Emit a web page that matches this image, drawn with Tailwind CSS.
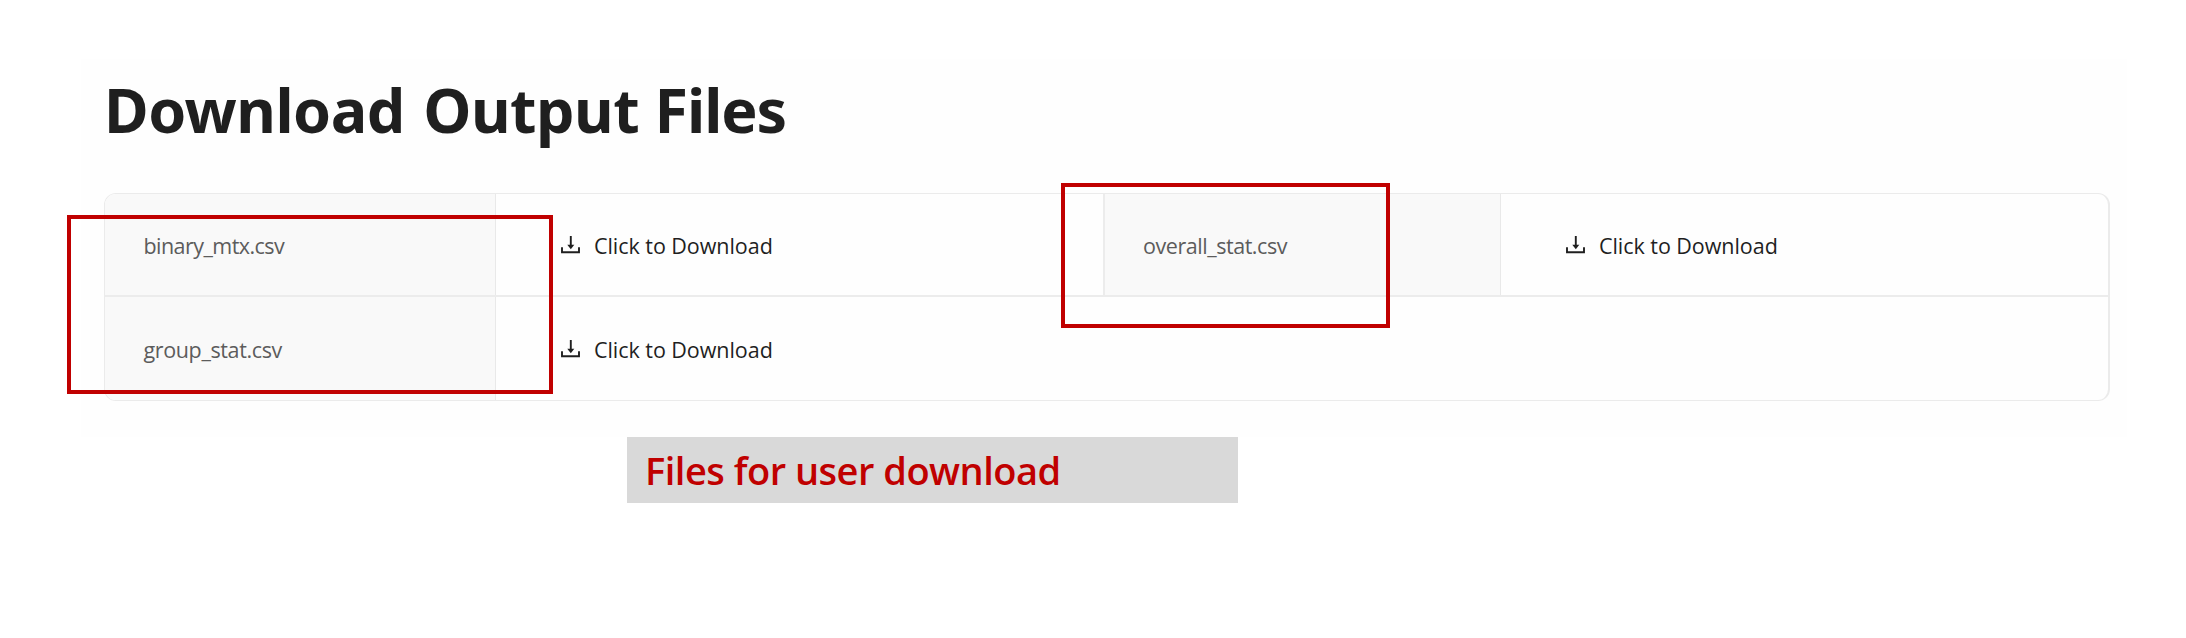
<!DOCTYPE html>
<html lang="en">
<head>
<meta charset="utf-8">
<title>Download Output Files</title>
<script src="https://cdn.jsdelivr.net/npm/@tailwindcss/browser@4"></script>
</head>
<body class="relative h-[638px] w-[2186px] overflow-hidden bg-white pt-[59px] font-['Open_Sans',sans-serif]">
<svg class="hidden">
  <symbol id="download" viewBox="0 0 19 18">
    <path d="M1 11.3V16.2H18V11.3" fill="none" stroke="currentColor" stroke-width="1.9"/>
    <path d="M9.8 0V10" fill="none" stroke="currentColor" stroke-width="1.9"/>
    <path d="M6.3 8.8H13.3L9.8 13.2Z" fill="currentColor"/>
  </symbol>
</svg>
<main class="ml-[81px] h-[378px] w-[2046px] bg-[#fefefe] pl-[23px] pt-[15px]">
  <h1 class="mb-[48px] font-['Noto_Sans',sans-serif] text-[61px] font-bold leading-[71px] tracking-[-0.5px] text-[#1f1f1f]"><span class="mr-[3px]">Download</span> Output <span class="tracking-[-1.1px]">Files</span></h1>
  <div class="w-[2006px] overflow-hidden rounded-[12px] border border-r-2 border-[#ebebeb] text-[21.5px] leading-[30px] text-[#1f1f1f]">
    <div class="flex h-[103px] border-b-2 border-[#ececec]">
      <div class="flex w-[391px] items-center border-r border-[#e9e9e9] bg-[#f9f9f9] pl-[38.5px] pt-[2px] tracking-[-0.55px] text-[#5c5c5c]">binary_mtx.csv</div>
      <div class="flex w-[609px] items-center border-r-2 border-[#ececec] pl-[65px]">
        <svg class="mr-[14px] h-[18px] w-[19px]"><use href="#download"/></svg><span class="pt-[2px] tracking-[-0.05px]">Click to Download</span>
      </div>
      <div class="flex w-[396px] items-center border-r border-[#e9e9e9] bg-[#f9f9f9] pl-[38px] pt-[2px] tracking-[-0.45px] text-[#5c5c5c]">overall_stat.csv</div>
      <div class="flex flex-1 items-center pl-[65px]">
        <svg class="mr-[14px] h-[18px] w-[19px]"><use href="#download"/></svg><span class="pt-[2px] tracking-[-0.05px]">Click to Download</span>
      </div>
    </div>
    <div class="flex h-[103px]">
      <div class="flex w-[391px] items-center border-r border-[#e9e9e9] bg-[#f9f9f9] pl-[38.5px] pt-[2px] tracking-[-0.37px] text-[#5c5c5c]">group_stat.csv</div>
      <div class="flex flex-1 items-center pl-[65px]">
        <svg class="mr-[14px] h-[18px] w-[19px]"><use href="#download"/></svg><span class="pt-[2px] tracking-[-0.05px]">Click to Download</span>
      </div>
    </div>
  </div>
</main>
<div class="ml-[627px] flex h-[66px] w-[611px] items-center bg-[#d9d9d9] pl-[18px] text-[38px] font-semibold leading-[52px] tracking-[-0.5px] text-[#c00000]">Files for user download</div>
<div class="absolute left-[67px] top-[215px] h-[179px] w-[486px] border-4 border-[#c00000]"></div>
<div class="absolute left-[1061px] top-[183px] h-[145px] w-[329px] border-4 border-[#c00000]"></div>
</body>
</html>
